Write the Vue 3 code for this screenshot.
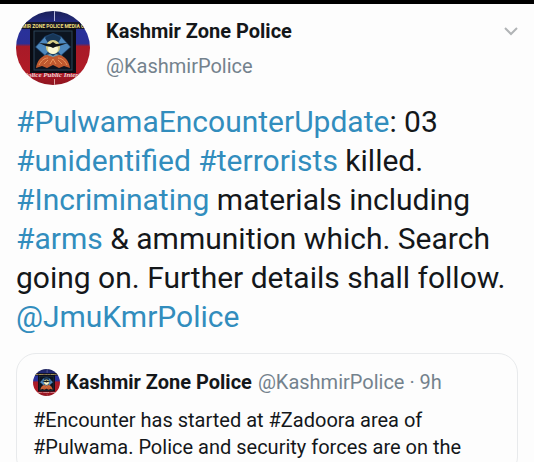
<script setup>
const author = { name: 'Kashmir Zone Police', handle: '@KashmirPolice' }

// one array per line, link parts are marked
const lines = [
  [{ text: '#PulwamaEncounterUpdate', link: true }, { text: ': 03' }],
  [{ text: '#unidentified', link: true }, { text: ' ' }, { text: '#terrorists', link: true }, { text: ' killed.' }],
  [{ text: '#Incriminating', link: true }, { text: ' materials including' }],
  [{ text: '#arms', link: true }, { text: ' & ammunition which. Search' }],
  [{ text: 'going on. Further details shall follow.' }],
  [{ text: '@JmuKmrPolice', link: true }]
]

const quoted = {
  time: '9h',
  lines: ['#Encounter has started at #Zadoora area of', '#Pulwama. Police and security forces are on the']
}
</script>

<template>
  <main class="page">
    <article class="tweet">
      <header class="tweet-header">
        <svg class="avatar" viewBox="0 0 74 74" role="img" aria-label="Kashmir Zone Police">
          <defs>
            <clipPath id="round"><circle cx="37" cy="37" r="37" /></clipPath>
            <linearGradient id="side" x1="0" y1="0" x2="0" y2="1">
              <stop offset="0" stop-color="#1b2159" />
              <stop offset="0.28" stop-color="#29319a" />
              <stop offset="0.44" stop-color="#2b2f96" />
              <stop offset="0.48" stop-color="#a81a28" />
              <stop offset="0.8" stop-color="#b01b26" />
              <stop offset="1" stop-color="#8e1420" />
            </linearGradient>
            <symbol id="crest" viewBox="0 0 74 74">
              <g clip-path="url(#round)">
                <rect width="74" height="74" fill="url(#side)" />
                <path d="M38 0h1v10h-1z" fill="#b7badb" />
                <path d="M0 11h74v7H0z" fill="#15162a" />
                <rect x="14" y="17" width="46" height="45" fill="#090b12" />
                <rect x="18" y="20" width="38" height="39" fill="#0c1420" stroke="#2c4558" />
                <path d="M19 36l10-11 8-3 8 3 10 11-10 9H29z" fill="#1d426b" />
                <path d="M20 36l9-10 8 9-8 9zM54 36l-9-10-8 9 8 9z" fill="#4e88bd" />
                <path d="M29 27l8-4 8 4-3 5H32z" fill="#173657" />
                <circle cx="37" cy="36" r="7" fill="#d9cf86" />
                <circle cx="37" cy="38" r="5" fill="#fbf8d6" />
                <path d="M23 32l11 1 3-2 3 2 12-1-9 3-4 1-2 1-2-1-5-1z" fill="#101316" />
                <path d="M27 45l7-2 3 2 3-2 7 2-4 3H31z" fill="#6f99b0" />
                <path d="M20 57c1-7 5-12 11-13l6 2 6-2c6 1 10 6 11 13l-6-2-5 2-6-3-6 3-5-2z" fill="#c0592f" />
                <path d="M23 54c2-4 5-7 9-7M51 54c-2-4-5-7-9-7M28 53l4-4M34 53l3-5 3 5M46 53l-4-4" fill="none" stroke="#e8935c" stroke-width="1" />
                <text class="crest-title" x="37" y="17" text-anchor="middle">SHMIR ZONE POLICE MEDIA CEN</text>
                <text class="crest-motto" x="36" y="66" text-anchor="middle">Police Public Interf</text>
                <path d="M38 68h1v6h-1z" fill="#d9a0a0" />
              </g>
            </symbol>
          </defs>
          <use href="#crest" width="74" height="74" />
        </svg>
        <div class="names">
          <strong class="name">{{ author.name }}</strong>
          <span class="handle">{{ author.handle }}</span>
        </div>
        <button class="more" type="button" aria-label="More">
          <svg viewBox="0 0 14 9" width="14" height="9">
            <path d="M1 1l6 6 6-6" fill="none" stroke="#b1b4b6" stroke-width="2" />
          </svg>
        </button>
      </header>

      <p class="body">
        <span v-for="(line, i) in lines" :key="i" class="line">
          <template v-for="(part, j) in line" :key="j">
            <a v-if="part.link" href="#">{{ part.text }}</a>
            <template v-else>{{ part.text }}</template>
          </template>
        </span>
      </p>

      <!-- Quoted tweet -->
      <section class="quote">
        <header class="quote-header">
          <svg class="avatar-small" viewBox="0 0 74 74" aria-hidden="true">
            <use href="#crest" width="74" height="74" />
          </svg>
          <strong class="name">{{ author.name }}</strong>
          <span class="handle">{{ author.handle }} · {{ quoted.time }}</span>
        </header>
        <p class="quote-body">
          <span v-for="line in quoted.lines" :key="line" class="line">{{ line }}</span>
        </p>
      </section>
    </article>
  </main>
</template>

<style>
body {
  margin: 0;
  background: #fdfdfd;
}
</style>

<style scoped>
.page {
  box-sizing: border-box;
  height: 100vh;
  overflow: hidden;
  border-top: 4px solid #000;
  background: #fdfdfd;
  color: #14171a;
  font-family: Roboto, "Liberation Sans", sans-serif;
}

.tweet {
  padding: 7px 16px 0;
}

.tweet-header {
  display: flex;
  align-items: flex-start;
}

.avatar {
  width: 74px;
  height: 74px;
  flex: none;
}

.names {
  display: flex;
  flex-direction: column;
  flex: 1;
  gap: 8px;
  padding: 7px 0 0 16px;
}

.name,
.handle {
  font-size: 20px;
  line-height: 27px;
}

.name {
  font-weight: 700;
}

.handle {
  color: #74828d;
}

.more {
  display: flex;
  margin-top: 12px;
  padding: 4px 0;
  border: 0;
  background: none;
  cursor: pointer;
}

.body {
  margin: 17px 0 0;
  font-size: 30px;
  line-height: 39px;
}

.line {
  display: block;
  white-space: nowrap;
}

.body a {
  color: #328dbd;
  text-decoration: none;
}

.quote {
  margin-top: 17px;
  padding: 15px 16px;
  border: 1px solid #e8eaec;
  border-radius: 20px;
}

.quote-header {
  display: flex;
  align-items: center;
  gap: 6px;
}

.avatar-small {
  width: 27px;
  height: 27px;
  flex: none;
}

.quote-body {
  margin: 11px 0 0;
  font-size: 20px;
  line-height: 27px;
}

.crest-title {
  fill: #f0df78;
  font-size: 5px;
  font-weight: 700;
}

.crest-motto {
  fill: #f0d4d6;
  font-family: "Liberation Serif", serif;
  font-size: 7px;
  font-style: italic;
  font-weight: 700;
}
</style>
